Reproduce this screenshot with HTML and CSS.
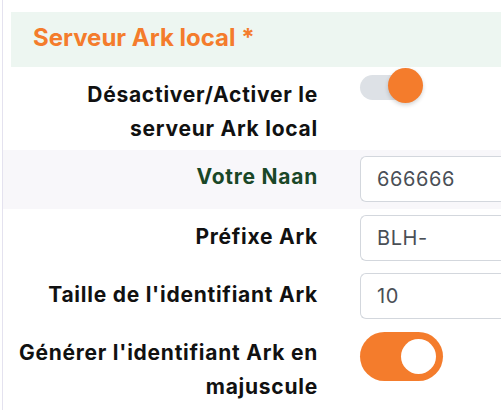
FILE: index.html
```html
<!DOCTYPE html>
<html lang="fr">
<head>
<meta charset="utf-8">
<title>Serveur Ark local</title>
<link rel="stylesheet" href="styles.css">
</head>
<body>
<div class="panel">
  <div class="panel-header">Serveur Ark local *</div>
  <div class="row row-switch">
    <div class="label">Désactiver/Activer le serveur Ark local</div>
    <div class="control">
      <span class="switch switch-off"><span class="track"></span><span class="knob"></span></span>
    </div>
  </div>
  <div class="row row-alt">
    <div class="label label-green">Votre Naan</div>
    <div class="control"><input class="field" type="text" value="666666"></div>
  </div>
  <div class="row">
    <div class="label">Préfixe Ark</div>
    <div class="control"><input class="field" type="text" value="BLH-"></div>
  </div>
  <div class="row">
    <div class="label">Taille de l'identifiant Ark</div>
    <div class="control"><input class="field" type="text" value="10"></div>
  </div>
  <div class="row">
    <div class="label">Générer l'identifiant Ark en majuscule</div>
    <div class="control">
      <span class="switch switch-on"><span class="knob"></span></span>
    </div>
  </div>
</div>
</body>
</html>
```

FILE: styles.css
```css
html, body {
  margin: 0;
  padding: 0;
  background: #ffffff;
}
body {
  font-family: Inter, "Noto Sans", "Liberation Sans", sans-serif;
  overflow: hidden;
}
.panel {
  margin-left: 2px;
  padding-top: 12px;
  border-left: 1px solid #e4e2ef;
  min-height: 410px;
  box-sizing: border-box;
}
.panel-header {
  margin-left: 8px;
  height: 55px;
  box-sizing: border-box;
  padding: 11px 0 0 22px;
  background: #edf6f1;
  color: #f47c2c;
  font-size: 24px;
  font-weight: 700;
  line-height: 29px;
  white-space: nowrap;
}
.row {
  display: grid;
  grid-template-columns: 314px 1fr;
  column-gap: 43px;
  align-items: start;
  padding: 6px 0;
}
.row-switch {
  padding-bottom: 4px;
}
.row-alt {
  background: #f8f7fa;
  padding-bottom: 7px;
}
.label {
  text-align: right;
  font-size: 21px;
  font-weight: 700;
  line-height: 34px;
  letter-spacing: 0.75px;
  color: #111111;
  padding-top: 5px;
  margin-right: -1px;
}
.label-green {
  color: #1a4727;
  padding-top: 4px;
}
.control {
  display: flex;
  min-width: 0;
}
.field {
  display: block;
  width: 160px;
  height: 46px;
  box-sizing: border-box;
  border: 1px solid #d3d7dd;
  border-right: none;
  border-radius: 6px 0 0 6px;
  padding: 0 16px;
  font-family: Inter, "Noto Sans", "Liberation Sans", sans-serif;
  font-size: 20px;
  letter-spacing: 0.6px;
  color: #4a4f56;
  background: #ffffff;
  outline: none;
}
.switch {
  position: relative;
  display: block;
}
.switch-off {
  width: 64px;
  height: 35px;
  margin-top: -5px;
}
.switch-off .track {
  position: absolute;
  left: 0;
  top: 7px;
  width: 50px;
  height: 25px;
  border-radius: 13px;
  background: #dde1e6;
}
.switch-off .knob {
  position: absolute;
  left: 28px;
  top: 0;
  width: 35px;
  height: 35px;
  border-radius: 50%;
  background: #f47c2c;
  box-shadow: 0 2px 4px rgba(0, 0, 0, 0.18);
}
.switch-on {
  width: 83px;
  height: 49px;
  border-radius: 25px;
  background: #f47c2c;
  margin-top: 1px;
}
.switch-on .knob {
  position: absolute;
  left: 41px;
  top: 7px;
  width: 35px;
  height: 35px;
  border-radius: 50%;
  background: #ffffff;
}
```
